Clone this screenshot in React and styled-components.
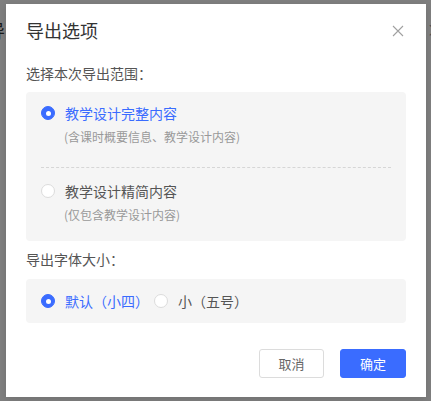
import React, { useState } from "react";
import styled, { createGlobalStyle } from "styled-components";

const GlobalStyle = createGlobalStyle`
  html, body {
    margin: 0;
    padding: 0;
  }
  body {
    font-family: "Noto Sans CJK SC", "Noto Sans", sans-serif;
    background: #fff;
  }
`;

const scopes = [
  { key: "full", label: "教学设计完整内容", desc: "(含课时概要信息、教学设计内容)" },
  { key: "brief", label: "教学设计精简内容", desc: "(仅包含教学设计内容)" },
];

const sizes = [
  { key: "s4", label: "默认（小四）" },
  { key: "s5", label: "小（五号）" },
];

function CloseIcon() {
  return (
    <svg width="12" height="12" viewBox="0 0 12 12">
      <path d="M1 1L11 11M11 1L1 11" stroke="#a0a0a0" strokeWidth="1.1" fill="none" />
    </svg>
  );
}

export default function App() {
  const [scope, setScope] = useState("full");
  const [size, setSize] = useState("s4");

  return (
    <>
      <GlobalStyle />
      <Page>
        {/* page behind the mask, only its edges show */}
        <BackTitle>导</BackTitle>
        <BackClose>×</BackClose>
        <Overlay>
          <Modal>
            <Header>
              <Title>导出选项</Title>
              <CloseButton>
                <CloseIcon />
              </CloseButton>
            </Header>

            <Label>选择本次导出范围：</Label>
            <ScopeBox>
              {scopes.map((s, i) => (
                <React.Fragment key={s.key}>
                  {i > 0 && <Divider />}
                  <Option onClick={() => setScope(s.key)}>
                    <Radio checked={scope === s.key} />
                    <OptionText checked={scope === s.key}>{s.label}</OptionText>
                  </Option>
                  <Desc>{s.desc}</Desc>
                </React.Fragment>
              ))}
            </ScopeBox>

            <Label second>导出字体大小：</Label>
            <SizeBox>
              {sizes.map((s) => (
                <Option key={s.key} inline onClick={() => setSize(s.key)}>
                  <Radio checked={size === s.key} />
                  <OptionText checked={size === s.key}>{s.label}</OptionText>
                </Option>
              ))}
            </SizeBox>

            <Footer>
              <Button>取消</Button>
              <Button primary>确定</Button>
            </Footer>
          </Modal>
        </Overlay>
      </Page>
    </>
  );
}

const Page = styled.div`
  position: relative;
  width: 431px;
  height: 401px;
  overflow: hidden;
  background: #fff;
`;

const BackTitle = styled.div`
  position: absolute;
  left: -13px;
  top: 18px;
  font-size: 18px;
  line-height: 24px;
  color: #333;
  white-space: nowrap;
`;

const BackClose = styled.div`
  position: absolute;
  left: 426px;
  top: 16px;
  font-size: 22px;
  line-height: 28px;
  color: #999;
  font-family: "DejaVu Sans", sans-serif;
  font-weight: 200;
`;

const Overlay = styled.div`
  position: absolute;
  inset: 0;
  background: rgba(0, 0, 0, 0.5);
  padding: 4px 5px 4px 6px;
  box-sizing: border-box;
`;

const Modal = styled.div`
  width: 420px;
  height: 393px;
  background: #fff;
  box-sizing: border-box;
  padding: 0 20px;
  display: flex;
  flex-direction: column;
  box-shadow: 0 2px 8px rgba(0, 0, 0, 0.12);
`;

const Header = styled.div`
  display: flex;
  align-items: center;
  justify-content: space-between;
  padding-top: 14px;
  margin-bottom: 21px;
`;

const Title = styled.div`
  font-size: 18px;
  line-height: 24px;
  color: #333;
`;

const CloseButton = styled.div`
  display: flex;
  align-items: center;
  margin-right: 2px;
  margin-top: 1px;
  cursor: pointer;
`;

const Label = styled.div`
  font-size: 14px;
  line-height: 20px;
  color: #555;
  margin-top: ${(p) => (p.second ? "8px" : "0")};
  margin-bottom: ${(p) => (p.second ? "10px" : "9px")};
`;

const ScopeBox = styled.div`
  background: #f5f5f5;
  border-radius: 4px;
  padding: 11px 15px 17px;
`;

const SizeBox = styled.div`
  background: #f5f5f5;
  border-radius: 4px;
  padding: 12px 15px;
  display: flex;
  align-items: center;
`;

const Option = styled.div`
  display: flex;
  align-items: center;
  height: 20px;
  cursor: pointer;
  margin-right: ${(p) => (p.inline ? "5px" : "0")};
`;

const Radio = styled.span`
  width: 14px;
  height: 14px;
  border-radius: 50%;
  box-sizing: border-box;
  flex-shrink: 0;
  margin-right: 10px;
  position: relative;
  background: ${(p) => (p.checked ? "#3a6cff" : "#fff")};
  border: 1px solid ${(p) => (p.checked ? "#3a6cff" : "#dcdcdc")};

  &::after {
    content: "";
    display: ${(p) => (p.checked ? "block" : "none")};
    position: absolute;
    left: 50%;
    top: 50%;
    width: 5px;
    height: 5px;
    margin: -2.5px 0 0 -2.5px;
    border-radius: 50%;
    background: #fff;
  }
`;

const OptionText = styled.span`
  font-size: 14px;
  line-height: 20px;
  color: ${(p) => (p.checked ? "#3a6cff" : "#555")};
  white-space: nowrap;
`;

const Desc = styled.div`
  font-size: 12px;
  line-height: 18px;
  color: #999;
  margin-top: 5px;
  padding-left: 23px;
`;

const Divider = styled.div`
  border-top: 1px dashed #d6d6d6;
  margin: 21px 0 13px;
`;

const Footer = styled.div`
  display: flex;
  justify-content: flex-end;
  gap: 16px;
  margin-top: 26px;
`;

const Button = styled.button`
  width: ${(p) => (p.primary ? "66px" : "65px")};
  height: 29px;
  border-radius: 3px;
  font-family: "Noto Sans CJK SC", sans-serif;
  font-size: 13px;
  padding: 0;
  cursor: pointer;
  box-sizing: border-box;
  border: 1px solid ${(p) => (p.primary ? "#3a6cff" : "#dcdcdc")};
  background: ${(p) => (p.primary ? "#3a6cff" : "#fff")};
  color: ${(p) => (p.primary ? "#fff" : "#666")};
`;
